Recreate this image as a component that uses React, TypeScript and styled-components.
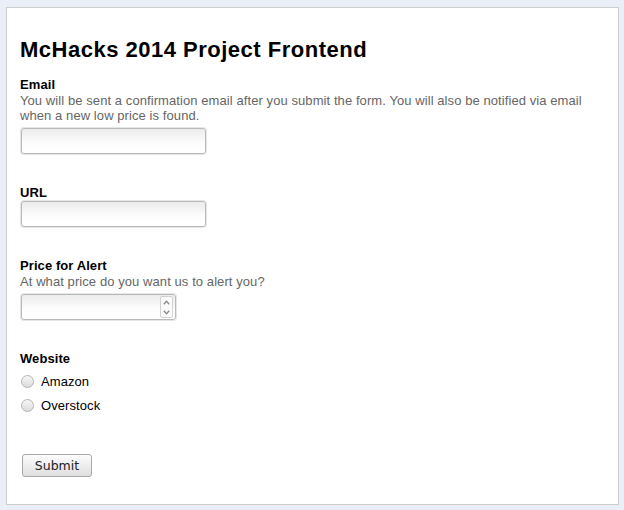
import React from 'react'
import styled, { createGlobalStyle } from 'styled-components'

const GlobalStyle = createGlobalStyle`
	html, body {
		margin: 0;
		padding: 0;
		background: #e9eef7;
	}
	body {
		font-family: 'Liberation Sans', Arial, sans-serif;
		font-size: 13px;
		letter-spacing: 0.08px;
		color: #000;
	}
`

const Panel = styled.form`
	box-sizing: border-box;
	margin: 7px 5px 5px 6px;
	height: 498px;
	background: #fff;
	border: 1px solid #cdcdcd;
	padding: 30px 13px 0 13px;
	display: flex;
	flex-direction: column;
`

const Title = styled.h1`
	margin: 0 0 15px 0;
	font-size: 22px;
	letter-spacing: 0.5px;
	line-height: 24px;
	font-weight: bold;
`

const Field = styled.div<{ last?: boolean }>`
	display: flex;
	flex-direction: column;
	align-items: flex-start;
	margin-bottom: ${p => (p.last ? '0' : '31px')};
`

const Label = styled.label`
	font-weight: bold;
	font-size: 13px;
	line-height: 16px;
`

const Hint = styled.div`
	color: #666;
	font-size: 13px;
	line-height: 15px;
	margin-bottom: 5px;
`

const TextInput = styled.input`
	box-sizing: border-box;
	width: 185px;
	height: 26px;
	margin: 0 0 0 1px;
	border: 1px solid #b9b9b9;
	border-radius: 3px;
	box-shadow: 0 0 0 1px #e6e6e6;
	background: linear-gradient(to bottom, #ececec, #fdfdfd 60%, #fff);
	font: inherit;
	padding: 2px 4px;
	outline: none;
`

const NumberBox = styled.div`
	box-sizing: border-box;
	width: 155px;
	height: 26px;
	margin-left: 1px;
	display: flex;
	align-items: stretch;
	border: 1px solid #b9b9b9;
	border-radius: 3px;
	box-shadow: 0 0 0 1px #e6e6e6;
	background: linear-gradient(to bottom, #ececec, #fdfdfd 60%, #fff);
`

const NumberField = styled.input`
	flex: 1;
	min-width: 0;
	border: none;
	background: transparent;
	font: inherit;
	padding: 2px 4px;
	outline: none;
`

const Spinner = styled.div`
	box-sizing: border-box;
	width: 13px;
	margin: 1px 2px 1px 0;
	border: 1px solid #d2d2d2;
	border-radius: 2px;
	background: #fbfbfb;
	display: flex;
	flex-direction: column;
`

const SpinHalf = styled.div`
	flex: 1;
	display: flex;
	align-items: center;
	justify-content: center;
	color: #8a8a8a;
`

const RadioList = styled.div`
	display: flex;
	flex-direction: column;
	margin-top: 2px;
`

const RadioRow = styled.label`
	display: flex;
	align-items: center;
	height: 24px;
	gap: 7px;
	line-height: 15px;
`

const Radio = styled.input`
	appearance: none;
	box-sizing: border-box;
	width: 13px;
	height: 13px;
	margin: 0 0 0 1px;
	border: 1px solid #b4b4b4;
	border-radius: 50%;
	background: linear-gradient(to bottom, #f6f6f6, #dcdcdc);
`

const SubmitButton = styled.button`
	box-sizing: border-box;
	margin: 37px 0 0 2px;
	width: 70px;
	height: 23px;
	border: 1px solid #a9a9a9;
	border-radius: 3px;
	background: linear-gradient(to bottom, #fdfdfd, #dedede);
	font-family: 'DejaVu Sans', Verdana, sans-serif;
	font-size: 12.5px;
	letter-spacing: 0;
	color: #222;
	padding: 0;
	align-self: flex-start;
`

const Chevron = ({ up }: { up?: boolean }) => (
	<svg width="7" height="5" viewBox="0 0 7 5">
		<path
			d={up ? 'M0.8 4.2 L3.5 1.2 L6.2 4.2' : 'M0.8 0.8 L3.5 3.8 L6.2 0.8'}
			fill="none"
			stroke="currentColor"
			strokeWidth="1.3"
		/>
	</svg>
)

export default function App() {
	return (
		<>
			<GlobalStyle />
			<Panel onSubmit={e => e.preventDefault()}>
				<Title>McHacks 2014 Project Frontend</Title>

				<Field>
					<Label>Email</Label>
					<Hint>
						You will be sent a confirmation email after you submit the form. You
						will also be notified via email when a new low price is found.
					</Hint>
					<TextInput type="text" />
				</Field>

				<Field>
					<Label>URL</Label>
					<TextInput type="text" />
				</Field>

				<Field>
					<Label>Price for Alert</Label>
					<Hint>At what price do you want us to alert you?</Hint>
					<NumberBox>
						<NumberField type="text" inputMode="decimal" />
						<Spinner>
							<SpinHalf>
								<Chevron up />
							</SpinHalf>
							<SpinHalf>
								<Chevron />
							</SpinHalf>
						</Spinner>
					</NumberBox>
				</Field>

				<Field last>
					<Label>Website</Label>
					<RadioList>
						<RadioRow>
							<Radio type="radio" name="site" value="amazon" />
							Amazon
						</RadioRow>
						<RadioRow>
							<Radio type="radio" name="site" value="overstock" />
							Overstock
						</RadioRow>
					</RadioList>
				</Field>

				<SubmitButton type="submit">Submit</SubmitButton>
			</Panel>
		</>
	)
}
